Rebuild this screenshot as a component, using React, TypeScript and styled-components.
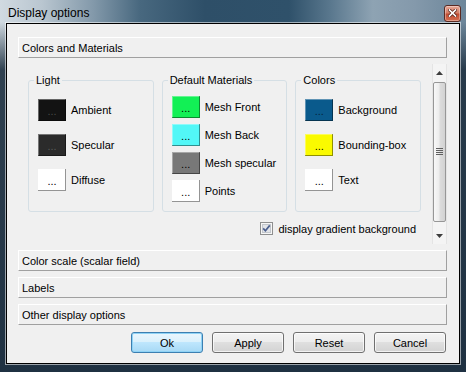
import React from 'react'
import styled, { createGlobalStyle } from 'styled-components'

const GlobalStyle = createGlobalStyle`
  html, body {
    margin: 0;
    padding: 0;
    background: #fff;
  }
  body {
    font-family: 'Liberation Sans', Arial, sans-serif;
    font-size: 11px;
    color: #000;
  }
`

interface SwatchItem {
  label: string
  color: string
  dots?: string
}

const lightItems: SwatchItem[] = [
  { label: 'Ambient', color: '#131313', dots: '#4a4a4a' },
  { label: 'Specular', color: '#2b2b2b', dots: '#5a5a5a' },
  { label: 'Diffuse', color: '#ffffff' },
]

const materialItems: SwatchItem[] = [
  { label: 'Mesh Front', color: '#12f055' },
  { label: 'Mesh Back', color: '#52f7f7' },
  { label: 'Mesh specular', color: '#787878' },
  { label: 'Points', color: '#ffffff' },
]

const colorItems: SwatchItem[] = [
  { label: 'Background', color: '#0a5a8c', dots: '#04243a' },
  { label: 'Bounding-box', color: '#fafa00' },
  { label: 'Text', color: '#ffffff' },
]

const App: React.FC = () => {
  const renderGroup = (title: string, items: SwatchItem[], pt: number, gap: number) => (
    <Group $pt={pt} $gap={gap}>
      <GroupTitle>{title}</GroupTitle>
      {items.map((item) => (
        <SwatchRow key={item.label}>
          <Swatch $color={item.color} $dots={item.dots || '#000'}>...</Swatch>
          <span>{item.label}</span>
        </SwatchRow>
      ))}
    </Group>
  )

  return (
    <>
      <GlobalStyle />
      <Window>
        <TitleBar>
          <TitleText>Display options</TitleText>
          <CloseButton>
            <svg width="9" height="8" viewBox="0 0 9 8">
              <path d="M1.5 1 L7.5 7 M7.5 1 L1.5 7" stroke="#5b241a" strokeWidth="3.2" strokeLinecap="square" />
              <path d="M1.5 1 L7.5 7 M7.5 1 L1.5 7" stroke="#fff" strokeWidth="1.7" strokeLinecap="square" />
            </svg>
          </CloseButton>
        </TitleBar>
        <Client>
          <TabButton>Colors and Materials</TabButton>
          <Page>
            <PageBody>
              <GroupRow>
                {renderGroup('Light', lightItems, 12, 13)}
                {renderGroup('Default Materials', materialItems, 9, 6)}
                {renderGroup('Colors', colorItems, 12, 13)}
              </GroupRow>
              <CheckRow>
                <svg width="13" height="13" viewBox="0 0 13 13">
                  <rect x="0.5" y="0.5" width="12" height="12" fill="#f6f6f6" stroke="#8e8f8f" />
                  <rect x="2.5" y="2.5" width="8" height="8" fill="#e2e4e8" stroke="#c3c7cc" />
                  <path d="M3.2 6.4 L5.4 8.8 L9.8 3.4" fill="none" stroke="#4b5f8e" strokeWidth="1.7" />
                </svg>
                <span>display gradient background</span>
              </CheckRow>
            </PageBody>
            <Scrollbar>
              <ArrowBox>
                <svg width="7" height="4" viewBox="0 0 7 4">
                  <path d="M0 4 L3.5 0 L7 4 Z" fill="#3d3d3d" />
                </svg>
              </ArrowBox>
              <Track>
                <Thumb>
                  <svg width="7" height="8" viewBox="0 0 7 8">
                    {[0, 2, 4, 6].map((y) => (
                      <rect key={y} x="0" y={y} width="7" height="1" fill="#5f5f5f" />
                    ))}
                  </svg>
                </Thumb>
              </Track>
              <ArrowBox>
                <svg width="7" height="4" viewBox="0 0 7 4">
                  <path d="M0 0 L3.5 4 L7 0 Z" fill="#3d3d3d" />
                </svg>
              </ArrowBox>
            </Scrollbar>
          </Page>
          <TabButton>Color scale (scalar field)</TabButton>
          <TabButton>Labels</TabButton>
          <TabButton>Other display options</TabButton>
          <ButtonRow>
            <DialogButton $default>Ok</DialogButton>
            <DialogButton>Apply</DialogButton>
            <DialogButton>Reset</DialogButton>
            <DialogButton>Cancel</DialogButton>
          </ButtonRow>
        </Client>
      </Window>
    </>
  )
}

const Window = styled.div`
  width: 466px;
  height: 372px;
  box-sizing: border-box;
  display: flex;
  flex-direction: column;
  background:
    linear-gradient(to bottom, rgba(34, 52, 68, 0) 0px, rgba(34, 52, 68, 0) 22px, rgba(34, 52, 68, 0.92) 70px, #1f3142 100%),
    linear-gradient(to right, #d1dae1 0%, #b9c6d0 9%, #8399aa 20%, #48687f 30%, #2e4f68 44%, #2f516a 62%, #5a788e 71%, #8ea3b3 80%, #8499ab 89%, #6c869a 100%);
`

const TitleBar = styled.div`
  height: 23px;
  box-sizing: border-box;
  padding: 3px 5px 0 8px;
  display: flex;
  align-items: center;
  justify-content: space-between;
`

const TitleText = styled.div`
  font-size: 12px;
  color: #000;
`

const CloseButton = styled.div`
  width: 17px;
  height: 17px;
  box-sizing: border-box;
  border: 1px solid #5a2a22;
  border-radius: 3px;
  background: linear-gradient(to bottom, #e7a897 0%, #d57e67 45%, #c24d33 55%, #d46d50 100%);
  box-shadow: inset 0 0 0 1px rgba(255, 255, 255, 0.35);
  display: flex;
  align-items: center;
  justify-content: center;
`

const Client = styled.div`
  flex: 1;
  margin: 0 6px 8px 6px;
  border: 1px solid #000;
  box-shadow: 0 0 0 1px rgba(255, 255, 255, 0.55);
  background: #f0f0f0;
  padding: 13px 12px 0 11px;
  display: flex;
  flex-direction: column;
  gap: 6px;
`

const TabButton = styled.div`
  height: 21px;
  flex-shrink: 0;
  box-sizing: border-box;
  border: 1px solid;
  border-color: #fff #a0a0a0 #a0a0a0 #fff;
  padding-left: 3px;
  display: flex;
  align-items: center;
`

const Page = styled.div`
  height: 180px;
  flex-shrink: 0;
  display: flex;
`

const PageBody = styled.div`
  flex: 1;
  padding: 10px 11px 0 10px;
  display: flex;
  flex-direction: column;
`

const GroupRow = styled.div`
  display: flex;
  gap: 8px;
`

const Group = styled.fieldset<{ $pt: number; $gap: number }>`
  flex: 1;
  min-width: 0;
  margin: 0;
  border: 1px solid #d5dfe5;
  border-radius: 3px;
  padding: ${(props) => props.$pt}px 4px 9px 9px;
  display: flex;
  flex-direction: column;
  gap: ${(props) => props.$gap}px;
`

const GroupTitle = styled.legend`
  padding: 0 2px;
  margin-left: -4px;
  line-height: 13px;
  font-size: 11px;
`

const SwatchRow = styled.div`
  display: flex;
  align-items: center;
  gap: 5px;
`

const Swatch = styled.button<{ $color: string; $dots: string }>`
  width: 28px;
  height: 22px;
  flex-shrink: 0;
  box-sizing: border-box;
  border: none;
  padding: 2px 0 0;
  background: ${(props) => props.$color};
  color: ${(props) => props.$dots};
  box-shadow: inset -1px -1px 0 rgba(0, 0, 0, 0.42), inset 1px 1px 0 rgba(255, 255, 255, 0.35);
  font-family: 'Liberation Sans', Arial, sans-serif;
  font-size: 11px;
  line-height: 20px;
  text-align: center;
`

const CheckRow = styled.label`
  display: flex;
  align-items: center;
  justify-content: flex-end;
  gap: 5px;
  margin-top: 10px;
  padding-right: 5px;
`

const Scrollbar = styled.div`
  width: 15px;
  display: flex;
  flex-direction: column;
  background: #f4f4f4;
  box-shadow: inset 1px 0 0 #e4e4e4, inset -1px 0 0 #e4e4e4;
`

const ArrowBox = styled.div`
  height: 17px;
  display: flex;
  align-items: center;
  justify-content: center;
`

const Track = styled.div`
  flex: 1;
  padding: 1px 1px 5px;
  display: flex;
`

const Thumb = styled.div`
  flex: 1;
  border: 1px solid #979797;
  border-radius: 2px;
  background: linear-gradient(to right, #f8f8f8, #ededed 45%, #dcdcdc 55%, #d2d2d2);
  display: flex;
  align-items: center;
  justify-content: center;
`

const ButtonRow = styled.div`
  display: flex;
  justify-content: flex-end;
  gap: 9px;
  margin-top: 1px;
  padding-right: 1px;
`

const DialogButton = styled.button<{ $default?: boolean }>`
  width: 72px;
  height: 21px;
  box-sizing: border-box;
  border: 1px solid ${(props) => (props.$default ? '#3c7fb1' : '#707070')};
  border-radius: 3px;
  background: ${(props) =>
    props.$default
      ? 'linear-gradient(to bottom, #eaf6fd 0%, #d9f0fc 50%, #bee6fd 50%, #a7d9f5 100%)'
      : 'linear-gradient(to bottom, #f4f4f4 0%, #ececec 50%, #dfdfdf 50%, #d3d3d3 100%)'};
  box-shadow: inset 0 0 0 1px ${(props) => (props.$default ? '#8fd3f6' : 'rgba(255,255,255,0.7)')};
  font-family: 'Liberation Sans', Arial, sans-serif;
  font-size: 11px;
  color: #000;
  padding: 0;
`

export default App
